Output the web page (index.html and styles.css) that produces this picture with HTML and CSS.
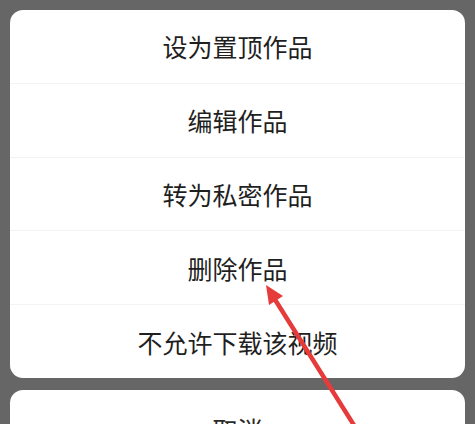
FILE: index.html
```html
<!DOCTYPE html>
<html lang="zh-CN">
<head>
<meta charset="utf-8">
<link rel="stylesheet" href="styles.css">
</head>
<body>
<div class="sheet">
  <ul class="card menu">
    <li class="item">设为置顶作品</li>
    <li class="item">编辑作品</li>
    <li class="item">转为私密作品</li>
    <li class="item">删除作品</li>
    <li class="item">不允许下载该视频</li>
  </ul>
  <div class="card cancel">取消</div>
</div>
<svg class="arrow" width="475" height="424" viewBox="0 0 475 424">
  <line x1="357" y1="430" x2="274" y2="298" stroke="#e63b3b" stroke-width="4.5" stroke-linecap="round"/>
  <polygon points="266,285 283,296 269,305" fill="#e63b3b"/>
</svg>
</body>
</html>
```
FILE: styles.css
```css
html, body {
  margin: 0;
  padding: 0;
}
body {
  background: #666666;
  width: 475px;
  height: 424px;
  overflow: hidden;
  position: relative;
  font-family: "Noto Sans CJK SC", "Noto Sans", sans-serif;
}
.sheet {
  padding: 10px 10px 0 10px;
  display: flex;
  flex-direction: column;
  gap: 12px;
}
.card {
  background: #ffffff;
  border-radius: 13px;
}
.menu {
  list-style: none;
  margin: 0;
  padding: 0;
  display: flex;
  flex-direction: column;
  height: 368px;
}
.item {
  flex: 1;
  display: flex;
  align-items: center;
  justify-content: center;
  font-size: 25px;
  color: #1f1f1f;
  border-top: 1px solid #f3f3f3;
}
.item:first-child {
  border-top: none;
}
.cancel {
  height: 78px;
  display: flex;
  align-items: center;
  justify-content: center;
  font-size: 25px;
  color: #2a2a2a;
}
.arrow {
  position: absolute;
  left: 0;
  top: 0;
}
```
